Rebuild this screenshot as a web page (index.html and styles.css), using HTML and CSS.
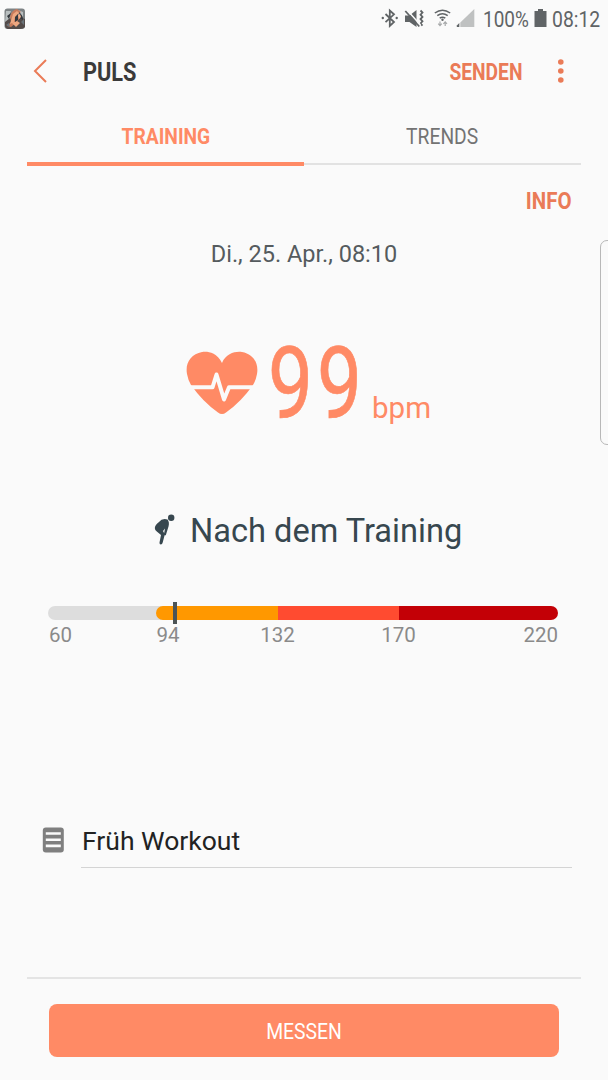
FILE: index.html
```html
<!DOCTYPE html>
<html lang="de">
<head>
<meta charset="utf-8">
<title>Puls</title>
<link rel="stylesheet" href="styles.css">
</head>
<body>
<div class="screen">
  <header class="status">
    <svg class="app-thumb" width="22" height="22" viewBox="0 0 22 22">
      <rect x=".5" y=".5" width="20.5" height="20.5" rx="3" fill="#7d8284"/>
      <path d="M2 3h5l-2 5 3-2-4 8-3 1zM14 2l5 2v5l-3-2z" fill="#b9bfc0"/>
      <path d="M1 14l5-4 4 4 5-5 6 2v8q-2 2-5 2H4q-3-1-3-4z" fill="#534b49"/>
      <path d="M6 8q2-6 7-7l4 3-3 2 2 4-4 5-5 4-4-1 4-4z" fill="#c77b5c"/>
      <path d="M9 6l4-3 2 2-4 4-1 5-4 2zM8 15l5-2 3 2-4 4z" fill="#eda780"/>
      <path d="M15 4q4 3 4 8l-3-2zM3 8l4-3-2 6zM11 9l3-3v6l-3 2z" fill="#34383d"/>
      <path d="M14 7l2-1 1 3-2 2z" fill="#f2b28f"/>
      <path d="M2 17l3-2 1 4zM17 14l3-3v6z" fill="#697379"/>
    </svg>
    <div class="status-right">
      <svg class="ic-system" width="96" height="24" viewBox="0 0 96 24">
        <g fill="none" stroke="#606466" stroke-width="1.8">
          <path d="M5.500 8l8.500 8-4.200 4V4.500L14 8.300l-8.500 7.900"/>
          <path d="M40.500 4.500l2 2-2 2.200 2 2.200-2 2.200 2 2.200-2 2.200 2 2.200"/>
          <path d="M54.800 7q7.700-5.500 15.400 0M57.300 9.700q5.200-3.800 10.400 0M59.700 12.200q2.800-2 5.600 0" stroke-width="1.500"/>
        </g>
        <g fill="#606466">
          <circle cx="2.800" cy="12" r="1.200"/><circle cx="16.700" cy="12" r="1.200"/>
          <path d="M25 9.500h4.500L36.500 4v17l-7-5H25z"/>
          <circle cx="62.500" cy="13.700" r="1.200"/>
          <path d="M76.800 21v-1.500l2.500-2.500v4z"/>
        </g>
        <path d="M26.500 3.500l14 15.500" stroke="#fafafa" stroke-width="1.600"/>
        <path d="M25.300 5l14 15.500" stroke="#606466" stroke-width="1.800"/>
        <path d="M80.300 16.500L94.300 3v18h-14z" fill="#bfc1c1"/>
        <path d="M60 15.500v4M58.200 17.700l1.800 2 1.800-2M65.200 20v-4M63.400 17.800l1.800-2 1.800 2" fill="none" stroke="#a7a9aa" stroke-width="1.200"/>
      </svg>
      <span class="status-text battery-text">100%</span>
      <svg class="ic-battery" width="13" height="20" viewBox="0 0 13 20"><path d="M4 1h5v2h3.500v16H.5V3H4z" fill="#606466"/></svg>
      <span class="status-text">08:12</span>
    </div>
  </header>

  <nav class="appbar">
    <svg class="ic-back" width="16" height="26" viewBox="0 0 16 26"><path d="M14 2L3 13l11 11" fill="none" stroke="#ea7b57" stroke-width="2"/></svg>
    <h1 class="title">PULS</h1>
    <span class="action send">SENDEN</span>
    <svg class="ic-more" width="8" height="26" viewBox="0 0 8 26" fill="#ea7b57"><circle cx="3.800" cy="4" r="2.800"/><circle cx="3.800" cy="13" r="2.800"/><circle cx="3.800" cy="22" r="2.800"/></svg>
  </nav>

  <div class="tabs">
    <div class="tab tab-active"><span class="tab-label">TRAINING</span></div>
    <div class="tab"><span class="tab-label">TRENDS</span></div>
  </div>

  <main>
    <div class="info-row"><span class="action info">INFO</span></div>
    <p class="date">Di., 25. Apr., 08:10</p>
    <div class="reading">
      <svg class="ic-heart" width="72" height="66" viewBox="0 0 72 66">
        <path d="M36 12C30-1 18 .5 16 1 5 3-1 12 1 23q1 6 4 11 12 17 27 27.500 4 3 8 0Q55 51 67 34q3-5 4-11C73 12 67 3 56 1 50 0 40 2 36 12z" fill="#ff8a65"/>
        <path d="M0 36.300h26.500L30.500 23.500 38 48.500l5-12.200H72" fill="none" stroke="#fafafa" stroke-width="4" stroke-linejoin="round"/>
      </svg>
      <span class="value">99</span>
      <span class="unit">bpm</span>
    </div>
    <div class="state">
      <svg class="ic-bend" width="22" height="32" viewBox="0 0 22 32" fill="#37474f">
        <circle cx="17.200" cy="3.800" r="3.200"/>
        <path d="M13.500 5.500Q8 4 5 8 1 11 .8 14q0 2 2 3.500L7 21 5.500 28.500q-.2 2 1.300 2t1.900-2l2.100-8L9 17l2-2.500L9.800 21l2 .2L14.500 12.500q1.200-4.500-1-7z"/>
      </svg>
      <span class="state-label">Nach dem Training</span>
    </div>
    <div class="range">
      <div class="bar">
        <div class="zone zone-base"></div>
        <div class="zone zone-light"></div>
        <div class="zone zone-mid"></div>
        <div class="zone zone-max"></div>
        <div class="marker"></div>
      </div>
      <div class="scale">
        <span>60</span><span>94</span><span>132</span><span>170</span><span>220</span>
      </div>
    </div>
    <div class="note">
      <svg class="ic-note" width="22" height="26" viewBox="0 0 22 26"><rect x=".8" y=".5" width="21" height="25" rx="3" fill="#7f7f7f"/><path d="M3.800 6.500h15M3.800 12.700h15M3.800 18.900h15" stroke="#fafafa" stroke-width="2.600"/></svg>
      <div class="note-field">Früh Workout</div>
    </div>
  </main>

  <footer class="footer">
    <button class="measure"><span class="measure-label">MESSEN</span></button>
  </footer>
  <div class="edge-handle"></div>
</div>
</body>
</html>
```
FILE: styles.css
```css
* { box-sizing: border-box; }
body { margin: 0; background: #fafafa; font-family: Roboto, "Noto Sans", sans-serif; }
.screen { position: relative; width: 608px; height: 1080px; overflow: hidden; display: flex; flex-direction: column; background: #fafafa; }
svg { display: block; flex: none; }

.status { height: 38px; flex: none; display: flex; justify-content: space-between; padding: 0 7px 0 4px; }
.app-thumb { margin-top: 8px; }
.status-right { display: flex; height: 38px; }
.ic-system { margin: 6px 7px 0 0; }
.status-text { width: 49px; white-space: nowrap; font-size: 22px; line-height: 39px; color: #606466; transform: scaleX(.88); transform-origin: left; }
.battery-text { width: 51px; transform: scaleX(.86); }
.ic-battery { margin: 8px 5px 0 0; }

.appbar { height: 69px; flex: none; display: flex; align-items: center; padding: 0 43px 3px 32px; }
.title { margin: 3px 0 0 35px; font-size: 25px; line-height: 30px; font-weight: 700; color: #3a3a3a; transform: scaleX(.87); transform-origin: left; }
.action { font-weight: 700; color: #ea7b57; line-height: 30px; transform: scaleX(.87); transform-origin: right; }
.send { margin: 3px 1px 0 auto; font-size: 23px; transform: scaleX(.835); }
.ic-more { margin-left: 34px; }

.tabs { height: 59px; flex: none; display: flex; margin: 0 27px; }
.tab { flex: 1; display: flex; justify-content: center; padding-top: 14px; font-size: 22.5px; line-height: 30px; color: #737373; border-bottom: 2px solid #e2e2e2; height: 58px; }
.tab-active { font-weight: 700; color: #ff8a65; border-bottom: 4px solid #ff8a65; height: 59px; }
.tab-label { transform: scaleX(.855); }

main { flex: 1; }
.info-row { display: flex; justify-content: flex-end; padding: 20px 36px 0 0; }
.info { font-size: 23.5px; }
.date { margin: 22px 0 0; text-align: center; font-size: 23.5px; line-height: 32px; color: #555b5e; }
.reading { height: 100px; margin-top: 64px; padding-left: 186px; display: flex; align-items: flex-start; color: #ff8a65; }
.ic-heart { margin-top: 17px; }
.value { width: 103px; margin-left: 10px; font-size: 100px; line-height: 100px; letter-spacing: 5px; -webkit-text-stroke: .7px #ff8a65; transform: scaleX(.8); transform-origin: left; }
.unit { font-size: 29.5px; line-height: 36px; margin: 56px 0 0 1px; }
.state { display: flex; margin-top: 76px; padding-left: 154px; }
.ic-bend { margin-top: 4px; }
.state-label { margin-left: 14px; font-size: 32.6px; line-height: 43px; color: #37474f; white-space: nowrap; }
.range { margin: 53px 50px 0 48px; }
.bar { position: relative; display: grid; grid-template-columns: 118px 112px 121px 159px; height: 14px; }
.zone-base { background: #ddd; border-radius: 7px 0 0 7px; }
.zone-light { background: #ff9800; margin-left: -10px; border-radius: 7px 0 0 7px; }
.zone-mid { background: #ff4b30; }
.zone-max { background: #c30006; border-radius: 0 7px 7px 0; }
.marker { position: absolute; left: 125px; top: -4px; width: 4px; height: 22px; background: #4c5456; }
.scale { display: grid; grid-template-columns: 72px 96px 123px 119px 100px; padding-top: 1px; font-size: 20.5px; line-height: 28px; color: #8a8a8a; }
.scale span { text-align: center; }
.scale span:first-child { text-align: left; padding-left: 1px; }
.scale span:last-child { text-align: right; }
.note { display: flex; margin: 178px 36px 0 42px; }
.note-field { flex: 1; height: 41px; margin-left: 17px; padding-left: 1px; border-bottom: 1px solid #d4d4d4; font-size: 26.5px; line-height: 28px; color: #222; }

.footer { height: 103px; flex: none; margin: 0 27px; padding: 25px 22px 0; border-top: 2px solid #e4e4e4; }
.measure { display: block; width: 510px; height: 53px; padding: 0; border: 0; border-radius: 8px; background: #ff8a65; color: #fff; font: 22.5px/54px Roboto, sans-serif; }
.measure-label { display: inline-block; transform: scaleX(.86); }
.edge-handle { position: absolute; left: 600px; top: 240px; width: 20px; height: 205px; border: 1px solid #b8b8b8; border-radius: 7px; }
```
